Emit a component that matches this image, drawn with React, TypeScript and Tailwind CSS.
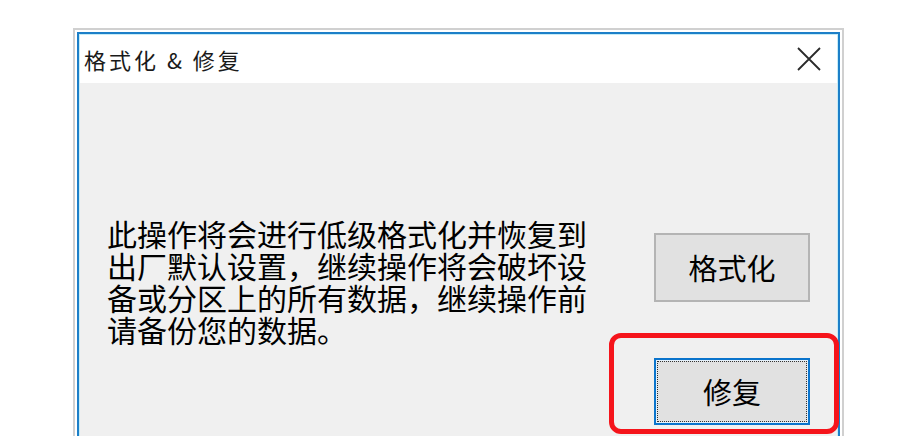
export default function App() {
  const font = { fontFamily: '"Noto Sans CJK SC", "Noto Sans", sans-serif' };
  return (
    <div className="relative w-[923px] h-[436px] overflow-hidden bg-white" style={font}>
      <div className="ml-[73px] mt-[28px] w-[771px] h-[420px] border-2 border-b-0 border-[#d0d0d0] bg-white p-[2px] pb-0">
        <div className="h-full border-2 border-b-0 border-[#1c7fc8]">
          <div className="h-full border border-b-0 border-[#c6ecf7] flex flex-col">
            {/* title bar */}
            <div className="h-[48px] bg-white flex items-center justify-between pl-[4px] pr-[16px]">
              <span className="text-[22px] leading-none tracking-[3px] text-[#1a1a1a]">格式化 &amp; 修复</span>
              <svg width="24" height="24" viewBox="0 0 24 24" className="block">
                <path d="M1 1 L23 23 M23 1 L1 23" stroke="#2a2a2a" strokeWidth="1.8" fill="none" />
              </svg>
            </div>
            {/* body */}
            <div className="flex-1 bg-[#f0f0f0] flex justify-between pt-[134px] pl-[27px] pr-[27px]">
              <p className="w-[490px] text-[30px] leading-[32px] text-black">
                此操作将会进行低级格式化并恢复到出厂默认设置，继续操作将会破坏设备或分区上的所有数据，继续操作前请备份您的数据。
              </p>
              <div className="flex flex-col mt-[16px] gap-[56px]">
                <button className="w-[156px] h-[69px] border-2 border-[#b4b4b4] bg-[#e1e1e1] text-[29px] text-black flex items-center justify-center">
                  格式化
                </button>
                <button className="w-[156px] h-[67px] border-2 border-[#0a74cc] bg-[#e5f1fb] p-[1px]">
                  <div className="w-full h-full border border-dotted border-[#333] bg-[#e1e1e1] flex items-center justify-center text-[29px] text-black">
                    修复
                  </div>
                </button>
              </div>
            </div>
          </div>
        </div>
      </div>
      {/* red annotation */}
      <div className="absolute left-[609px] top-[333px] w-[230px] h-[101px] border-[5px] border-[#f5141b] rounded-[12px]" />
    </div>
  );
}
